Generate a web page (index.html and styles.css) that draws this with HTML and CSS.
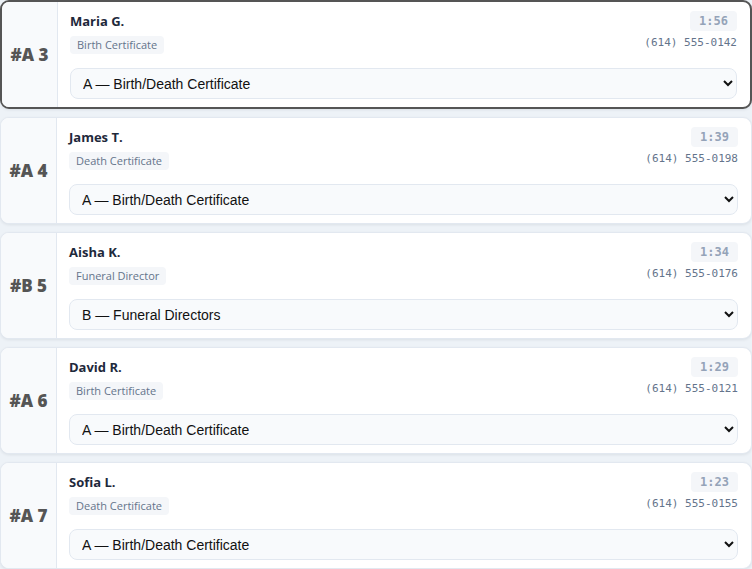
FILE: index.html
```html
<!DOCTYPE html>
<html lang="en">

<head>
  <meta charset="utf-8" />
  <meta name="viewport" content="width=device-width, initial-scale=1.0">
  <title>Queue</title>
  <link rel="stylesheet" href="styles.css">
</head>

<body>

  <main class="queue">

    <div class="ticket active">
      <div class="ticket-num">#A 3</div>
      <div class="ticket-body">
        <div class="ticket-head">
          <div class="who">
            <div class="name">Maria G.</div>
            <span class="tag">Birth Certificate</span>
          </div>
          <div class="meta">
            <span class="time">1:56</span>
            <span class="phone">(614) 555-0142</span>
          </div>
        </div>
        <select class="route">
          <option selected>A — Birth/Death Certificate</option>
          <option>B — Funeral Directors</option>
        </select>
      </div>
    </div>

    <div class="ticket">
      <div class="ticket-num">#A 4</div>
      <div class="ticket-body">
        <div class="ticket-head">
          <div class="who">
            <div class="name">James T.</div>
            <span class="tag">Death Certificate</span>
          </div>
          <div class="meta">
            <span class="time">1:39</span>
            <span class="phone">(614) 555-0198</span>
          </div>
        </div>
        <select class="route">
          <option selected>A — Birth/Death Certificate</option>
          <option>B — Funeral Directors</option>
        </select>
      </div>
    </div>

    <div class="ticket">
      <div class="ticket-num">#B 5</div>
      <div class="ticket-body">
        <div class="ticket-head">
          <div class="who">
            <div class="name">Aisha K.</div>
            <span class="tag">Funeral Director</span>
          </div>
          <div class="meta">
            <span class="time">1:34</span>
            <span class="phone">(614) 555-0176</span>
          </div>
        </div>
        <select class="route">
          <option>A — Birth/Death Certificate</option>
          <option selected>B — Funeral Directors</option>
        </select>
      </div>
    </div>

    <div class="ticket">
      <div class="ticket-num">#A 6</div>
      <div class="ticket-body">
        <div class="ticket-head">
          <div class="who">
            <div class="name">David R.</div>
            <span class="tag">Birth Certificate</span>
          </div>
          <div class="meta">
            <span class="time">1:29</span>
            <span class="phone">(614) 555-0121</span>
          </div>
        </div>
        <select class="route">
          <option selected>A — Birth/Death Certificate</option>
          <option>B — Funeral Directors</option>
        </select>
      </div>
    </div>

    <div class="ticket">
      <div class="ticket-num">#A 7</div>
      <div class="ticket-body">
        <div class="ticket-head">
          <div class="who">
            <div class="name">Sofia L.</div>
            <span class="tag">Death Certificate</span>
          </div>
          <div class="meta">
            <span class="time">1:23</span>
            <span class="phone">(614) 555-0155</span>
          </div>
        </div>
        <select class="route">
          <option selected>A — Birth/Death Certificate</option>
          <option>B — Funeral Directors</option>
        </select>
      </div>
    </div>

  </main>

</body>

</html>
```

FILE: styles.css
```css
body {
  font-family: "Open Sans", "Noto Sans", sans-serif;
  margin: 0;
  padding: 0;
  background-color: #edf2f7;
  color: #1e293b;
}

.queue {
  display: flex;
  flex-direction: column;
  gap: 8px;
}

.ticket {
  display: flex;
  background-color: #fff;
  border: 1px solid #e2e8f0;
  border-radius: 9px;
  box-shadow: 0 1px 3px rgba(15, 23, 42, 0.08);
  overflow: hidden;
}

.ticket.active {
  border: 2px solid #555;
}

.ticket-num {
  width: 55px;
  flex-shrink: 0;
  display: flex;
  align-items: center;
  justify-content: center;
  background-color: #f8fafc;
  border-right: 1px solid #e2e8f0;
  font-size: 17px;
  font-weight: 800;
  color: #555;
}

.ticket-body {
  flex: 1;
  padding: 9px 13px 8px 12px;
}

.ticket-head {
  display: flex;
  justify-content: space-between;
}

.who {
  display: flex;
  flex-direction: column;
  align-items: flex-start;
}

.name {
  font-size: 13px;
  font-weight: 700;
  line-height: 20px;
}

.tag {
  margin-top: 5px;
  font-size: 11px;
  line-height: 14px;
  color: #64748b;
  background-color: #f4f6f9;
  border-radius: 4px;
  padding: 2px 7px;
}

.meta {
  display: flex;
  flex-direction: column;
  align-items: flex-end;
}

.time {
  font-family: "DejaVu Sans Mono", "Liberation Mono", monospace;
  font-size: 12px;
  font-weight: 700;
  line-height: 14px;
  color: #94a3b8;
  background-color: #f4f6f9;
  border-radius: 4px;
  padding: 3px 9px;
}

.phone {
  margin-top: 5px;
  font-family: "DejaVu Sans Mono", "Liberation Mono", monospace;
  font-size: 11px;
  line-height: 14px;
  color: #64748b;
}

.route {
  display: block;
  width: 100%;
  height: 31px;
  margin-top: 14px;
  padding: 0 8px;
  font-family: "Liberation Sans", Arial, sans-serif;
  font-size: 14px;
  color: #111;
  background-color: #f8fafc;
  border: 1px solid #e2e8f0;
  border-radius: 8px;
}
```
